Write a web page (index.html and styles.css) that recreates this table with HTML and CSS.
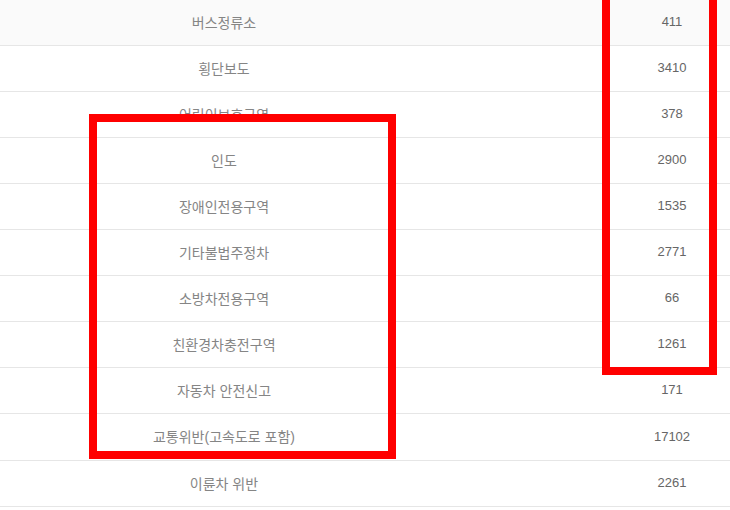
FILE: index.html
```html
<!DOCTYPE html>
<html lang="ko">
<head>
<meta charset="utf-8">
<title>신고 현황</title>
<link rel="stylesheet" href="styles.css">
</head>
<body>
<div class="wrap">
  <div class="table">
    <div class="row first"><div class="cell name">버스정류소</div><div class="cell num">411</div></div>
    <div class="row"><div class="cell name">횡단보도</div><div class="cell num">3410</div></div>
    <div class="row"><div class="cell name">어린이보호구역</div><div class="cell num">378</div></div>
    <div class="row"><div class="cell name">인도</div><div class="cell num">2900</div></div>
    <div class="row"><div class="cell name">장애인전용구역</div><div class="cell num">1535</div></div>
    <div class="row"><div class="cell name">기타불법주정차</div><div class="cell num">2771</div></div>
    <div class="row"><div class="cell name">소방차전용구역</div><div class="cell num">66</div></div>
    <div class="row"><div class="cell name">친환경차충전구역</div><div class="cell num">1261</div></div>
    <div class="row"><div class="cell name">자동차 안전신고</div><div class="cell num">171</div></div>
    <div class="row tall"><div class="cell name">교통위반(고속도로 포함)</div><div class="cell num">17102</div></div>
    <div class="row"><div class="cell name">이륜차 위반</div><div class="cell num">2261</div></div>
  </div>
  <div class="mark mark-left"></div>
  <div class="mark mark-right"></div>
</div>
</body>
</html>
```
FILE: styles.css
```css
html, body {
  margin: 0;
  padding: 0;
  background: #ffffff;
  overflow: hidden;
}
.wrap {
  position: relative;
  width: 730px;
  height: 510px;
  overflow: hidden;
}
.table {
  width: 896px;
  display: flex;
  flex-direction: column;
  font-family: "Liberation Sans", "Noto Sans CJK KR", sans-serif;
  font-size: 13px;
  color: #6a6a6a;
}
.row {
  display: grid;
  grid-template-columns: 448px 448px;
  height: 45px;
  border-bottom: 1px solid #e6e6e6;
}
.row.first {
  background: #fafafa;
}
.row.tall {
  height: 46px;
}
.cell {
  display: flex;
  align-items: center;
  justify-content: center;
  padding-bottom: 2px;
}
.name {
  font-size: 14px;
  color: #858585;
}
.num {
  color: #666666;
}
.mark {
  position: absolute;
  border: 8px solid #ff0000;
  box-sizing: border-box;
}
.mark-left {
  left: 89px;
  top: 114px;
  width: 307px;
  height: 345px;
}
.mark-right {
  left: 602px;
  top: -20px;
  width: 115px;
  height: 395px;
}
```
